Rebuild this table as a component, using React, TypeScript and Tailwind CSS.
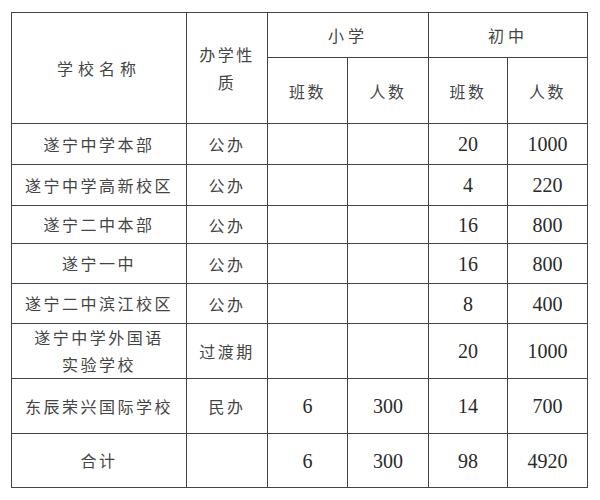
import React from 'react';

type Row = {
  name: React.ReactNode;
  kind: string;
  pc?: string;
  pp?: string;
  mc: string;
  mp: string;
  h: string;
};

const rows: Row[] = [
  { name: '遂宁中学本部', kind: '公办', mc: '20', mp: '1000', h: 'h-[41px]' },
  { name: '遂宁中学高新校区', kind: '公办', mc: '4', mp: '220', h: 'h-[41px]' },
  { name: '遂宁二中本部', kind: '公办', mc: '16', mp: '800', h: 'h-[38px]' },
  { name: '遂宁一中', kind: '公办', mc: '16', mp: '800', h: 'h-[40px]' },
  { name: '遂宁二中滨江校区', kind: '公办', mc: '8', mp: '400', h: 'h-[40px]' },
  {
    name: (
      <>
        遂宁中学外国语
        <br />
        实验学校
      </>
    ),
    kind: '过渡期',
    mc: '20',
    mp: '1000',
    h: 'h-[54px]',
  },
  { name: '东辰荣兴国际学校', kind: '民办', pc: '6', pp: '300', mc: '14', mp: '700', h: 'h-[55px]' },
  { name: '合计', kind: '', pc: '6', pp: '300', mc: '98', mp: '4920', h: 'h-[54px]' },
];

const cn = "font-['Noto_Sans_CJK_SC','Noto_Sans',sans-serif] text-[16px] tracking-[2.5px] text-[#444]";
const num = "font-['Liberation_Serif',serif] text-[20px] text-[#2a2a2a]";
const cell = 'border border-[#444] text-center align-middle p-0';

export default function App(): React.ReactElement {
  return (
    <div className="w-[600px] h-[500px] bg-white pt-[12px] pl-[11px]">
      <table className="border-collapse table-fixed w-[576px]">
        <colgroup>
          <col className="w-[175px]" />
          <col className="w-[81px]" />
          <col className="w-[80px]" />
          <col className="w-[81px]" />
          <col className="w-[79px]" />
          <col className="w-[80px]" />
        </colgroup>
        <tbody>
          <tr className="h-[45px]">
            <td rowSpan={2} className={`${cell} ${cn} tracking-[5px]`}>
              学校名称
            </td>
            <td rowSpan={2} className={`${cell} ${cn} leading-[28px]`}>
              办学性
              <br />
              质
            </td>
            <td colSpan={2} className={`${cell} ${cn} tracking-[4px]`}>
              小学
            </td>
            <td colSpan={2} className={`${cell} ${cn} tracking-[4px]`}>
              初中
            </td>
          </tr>
          <tr className="h-[66px]">
            <td className={`${cell} ${cn}`}>班数</td>
            <td className={`${cell} ${cn}`}>人数</td>
            <td className={`${cell} ${cn}`}>班数</td>
            <td className={`${cell} ${cn}`}>人数</td>
          </tr>
          {rows.map((r, i) => (
            <tr key={i} className={r.h}>
              <td className={`${cell} ${cn} leading-[27px]`}>{r.name}</td>
              <td className={`${cell} ${cn}`}>{r.kind}</td>
              <td className={`${cell} ${num}`}>{r.pc}</td>
              <td className={`${cell} ${num}`}>{r.pp}</td>
              <td className={`${cell} ${num}`}>{r.mc}</td>
              <td className={`${cell} ${num}`}>{r.mp}</td>
            </tr>
          ))}
        </tbody>
      </table>
    </div>
  );
}
